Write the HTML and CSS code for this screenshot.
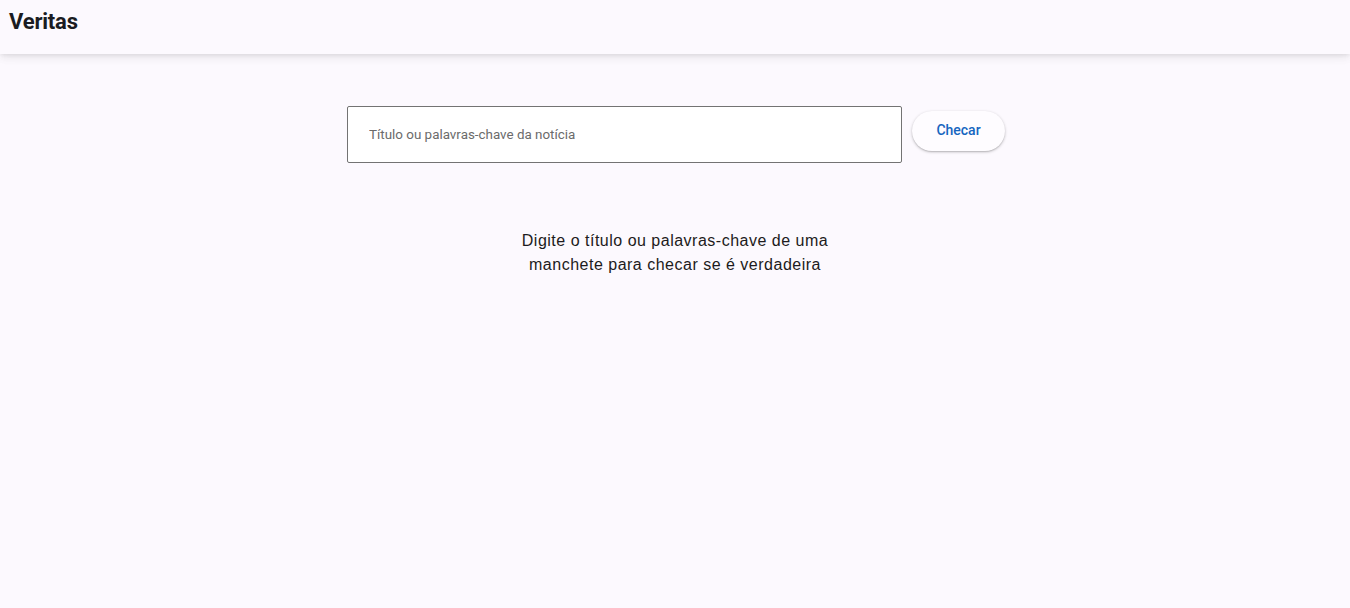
FILE: index.html
```html
<!DOCTYPE html>
<html lang="pt">
<head>
<meta charset="utf-8">
<title>Veritas</title>
<link rel="stylesheet" href="styles.css">
</head>
<body>
<header class="appbar">
  <h1 class="brand">Veritas</h1>
</header>
<main class="content">
  <form class="search">
    <div class="field">
      <input class="input" type="text" placeholder="Título ou palavras-chave da notícia">
    </div>
    <button class="btn" type="button">Checar</button>
  </form>
  <p class="hint">Digite o título ou palavras-chave de uma<br>manchete para checar se é verdadeira</p>
</main>
</body>
</html>
```
FILE: styles.css
```css
* { box-sizing: border-box; }
html, body { margin: 0; height: 100%; }
body {
  background: #fcf9fe;
  font-family: Roboto, "Liberation Sans", Arial, sans-serif;
  color: #1d1b20;
}
.appbar {
  height: 54px;
  background: #fcf9fe;
  box-shadow: 0 2px 4px -1px rgba(0,0,0,0.07), 0 4px 8px 0 rgba(0,0,0,0.05), 0 1px 14px 0 rgba(0,0,0,0.05);
  padding: 0 9px;
  display: flex;
  align-items: flex-start;
}
.brand {
  margin: 9px 0 0;
  font-size: 22px;
  font-weight: 700;
  letter-spacing: -0.2px;
  color: #1a1c22;
}
.content {
  display: flex;
  flex-direction: column;
  align-items: center;
  padding-top: 52px;
}
.search {
  display: flex;
  align-items: center;
  gap: 10px;
  margin-left: 2px;
}
.field {
  width: 555px;
  height: 57px;
  border: 1px solid #737373;
  border-radius: 2px;
  background: #fff;
  display: flex;
  align-items: center;
  padding: 0 20px 0 21px;
}
.input {
  border: none;
  outline: none;
  width: 100%;
  padding: 0;
  font-family: Roboto, sans-serif;
  font-size: 13.4px;
  background: transparent;
  color: #333;
}
.input::placeholder { color: #6b6b6b; opacity: 1; }
.btn {
  height: 40px;
  width: 93px;
  border: none;
  border-radius: 20px;
  background: #fefcff;
  box-shadow: 0 1px 3px rgba(0,0,0,0.25), 0 1px 1px rgba(0,0,0,0.08);
  color: #1565c0;
  font-family: Roboto, sans-serif;
  font-size: 14px;
  font-weight: 500;
  margin-bottom: 8px;
  padding: 0 0 1px;
  cursor: pointer;
}
.hint {
  margin: 66px 0 0;
  text-align: center;
  font-family: "Liberation Sans", Arial, sans-serif;
  font-size: 16px;
  line-height: 24px;
  color: #1d1b20;
  letter-spacing: 0.5px;
}
```
